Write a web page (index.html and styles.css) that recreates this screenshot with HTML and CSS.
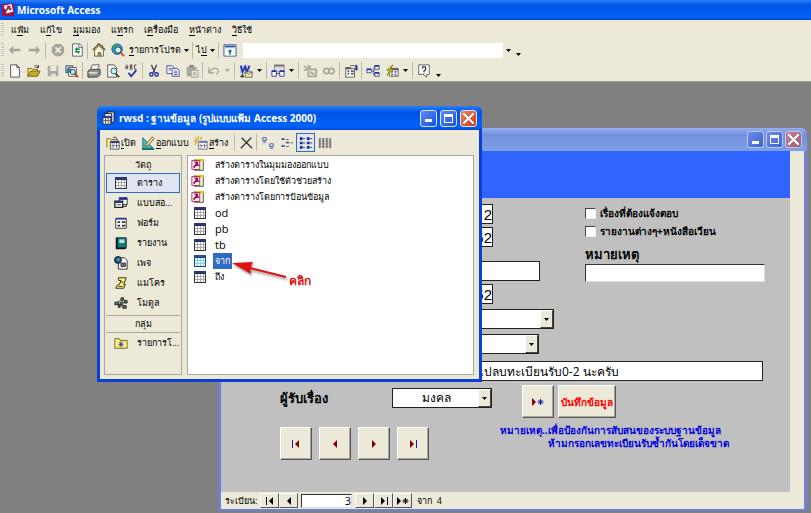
FILE: index.html
```
<!DOCTYPE html>
<html lang="th">
<head>
<meta charset="utf-8">
<title>Microsoft Access</title>
<link rel="stylesheet" href="styles.css">
</head>
<body>
<svg class="defs" aria-hidden="true">
  <symbol id="key" viewBox="0 0 16 16"><path d="M1 1h14v14H1z" fill="#a01040"/><path d="M3 3l9-2 2 9-8 2z" fill="#fff"/><path d="M5 9l5-5M7 4l4 0M9 7l3 0M3 12l3-3" stroke="#a01040" stroke-width="2"/></symbol>
  <symbol id="back" viewBox="0 0 16 16"><path d="M1 8l5-5v3.500h8v3H6V13z" fill="#a5a59b"/></symbol>
  <symbol id="fwd" viewBox="0 0 16 16"><path d="M15 8l-5-5v3.500H2v3h8V13z" fill="#a5a59b"/></symbol>
  <symbol id="stop" viewBox="0 0 16 16"><path d="M5 1h6l4 4v6l-4 4H5l-4-4V5z" fill="#a5a59b"/><path d="M5 5l6 6M11 5l-6 6" stroke="#f2f1e4" stroke-width="2"/></symbol>
  <symbol id="refresh" viewBox="0 0 16 16"><path d="M3 1h8l3 3v11H3z" fill="#fff" stroke="#556"/><path d="M10 1v4h4" fill="none" stroke="#556"/><path d="M5 8l3-4v2h3v2H8v1M12 9l-3 4v-2H6V9" fill="#159447"/></symbol>
  <symbol id="home" viewBox="0 0 16 16"><path d="M3 8v7h10V8L8 3z" fill="#fffbd5" stroke="#555"/><path d="M1 8l7-7 7 7" fill="none" stroke="#786634" stroke-width="2"/><path d="M12 2v4M7 15v-4h3v4" fill="#a89448" stroke="#555"/></symbol>
  <symbol id="globe" viewBox="0 0 16 16"><circle cx="7" cy="7" r="6" fill="#2b9dc4" stroke="#18517a"/><path d="M2 4l4-2 1 3-3 2z" fill="#3aa35b"/><circle cx="8" cy="8" r="3.500" fill="#cff3ff" stroke="#444"/><path d="M11 11l4 4" stroke="#c24b22" stroke-width="2"/></symbol>
  <symbol id="showbar" viewBox="0 0 16 16"><path d="M1 2h14v13H1z" fill="#dfeafa" stroke="#45608e"/><path d="M2 3h12v2H2z" fill="#3457a0"/><path d="M3 7h10v7H3z" fill="#fff"/><path d="M8 7l3 3H9v3H7v-3H5z" fill="#198272"/></symbol>
  <symbol id="new" viewBox="0 0 16 16"><path d="M3 1h7l3 3v11H3z" fill="#fff" stroke="#445"/><path d="M10 1v3h3" fill="none" stroke="#445"/></symbol>
  <symbol id="folder" viewBox="0 0 16 16"><path d="M1 14V5h4l1 1h6v3" fill="#fff08a" stroke="#6b6010"/><path d="M1 14l3-6h11l-3 6z" fill="#c9a92b" stroke="#6b6010"/><path d="M8 3q3-3 5 1m0-3v3h-3" fill="none" stroke="#333"/></symbol>
  <symbol id="save" viewBox="0 0 16 16"><path d="M2 2h12v12H2z" fill="#aaa9a0"/><path d="M5 2h7v6H5zM6 11h5v3H6z" fill="#ece9d8"/></symbol>
  <symbol id="filesearch" viewBox="0 0 16 16"><path d="M1 2h8v8H1z" fill="#ccd" stroke="#444"/><path d="M4 4h9v10H4z" fill="#fff" stroke="#555"/><path d="M2 5h5v5H2z" fill="#2c7db0"/><circle cx="9" cy="9" r="3" fill="#aeeaf0" stroke="#333"/><path d="M11 11l4 4" stroke="#a53a20" stroke-width="2"/></symbol>
  <symbol id="print" viewBox="0 0 16 16"><path d="M4 7l2-6h8l-2 6" fill="#fff" stroke="#555"/><path d="M1 8l3-2h11v6l-3 3H1z" fill="#888" stroke="#444"/><path d="M2 9h10v2H2z" fill="#ddd"/><path d="M4 12h6" stroke="#ccb93b"/></symbol>
  <symbol id="preview" viewBox="0 0 16 16"><path d="M2 1h7l3 3v11H2z" fill="#fff" stroke="#445"/><circle cx="9" cy="8" r="3.500" fill="#b7eef4" stroke="#344"/><path d="M11 11l4 4" stroke="#444" stroke-width="2"/></symbol>
  <symbol id="spell" viewBox="0 0 16 16"><path d="M1 6V2l1-1 1 1v4M1 4h2M6 1v5h2V1zM6 3h2M13 1h-2v5h2" fill="none" stroke="#444"/><path d="M4 10l3 4 6-7" fill="none" stroke="#2435a0" stroke-width="2"/></symbol>
  <symbol id="cut" viewBox="0 0 16 16"><path d="M5 1l4 9M11 1l-4 9" stroke="#445" stroke-width="1.500"/><circle cx="5" cy="12" r="2" fill="none" stroke="#26359d" stroke-width="1.500"/><circle cx="11" cy="12" r="2" fill="none" stroke="#26359d" stroke-width="1.500"/></symbol>
  <symbol id="copy" viewBox="0 0 16 16"><path d="M1 2h6l2 2v7H1z" fill="#fff" stroke="#34438e"/><path d="M7 5h6l2 2v7H7z" fill="#fff" stroke="#34438e"/><path d="M3 5h3M3 7h3M9 8h4M9 10h4M9 12h4" stroke="#34438e"/></symbol>
  <symbol id="paste" viewBox="0 0 16 16"><path d="M2 3h11v11H2z" fill="#aaa99e"/><path d="M5 1h5v3H5z" fill="#8d8c84"/><path d="M7 7h8v8H7z" fill="#e9e6d8" stroke="#999"/><path d="M9 10h4M9 12h4" stroke="#999"/></symbol>
  <symbol id="undo" viewBox="0 0 16 16"><path d="M2 4v6h6M3 9q3-5 8-4 4 3 0 7" fill="none" stroke="#aaa99e" stroke-width="1.500"/></symbol>
  <symbol id="word" viewBox="0 0 16 16"><path d="M1 1h12v10H1z" fill="#c5cdf0"/><path d="M2 2l2 7 3-6 2 6 3-7" fill="none" stroke="#26359d" stroke-width="2"/><path d="M7 9h8v6H7z" fill="#fff6bd" stroke="#555"/><path d="M7 9l4 3 4-3" fill="none" stroke="#555"/><path d="M1 15l3-4 2 4z" fill="#333"/></symbol>
  <symbol id="relations" viewBox="0 0 16 16"><path d="M4 1h11v8H4z" fill="#ddd" stroke="#888"/><path d="M4 2h11" stroke="#777" stroke-width="2"/><path d="M1 8h5v6H1zM10 8h5v6h-5z" fill="#fff" stroke="#26359d"/><path d="M1 8h5M10 8h5" stroke="#26359d" stroke-width="2"/><path d="M6 11h4" stroke="#333"/></symbol>
  <symbol id="analyze" viewBox="0 0 16 16"><path d="M6 6h9v8H6z" fill="none" stroke="#aaa99e" stroke-width="2"/><path d="M1 2l4 4M6 1v4M1 7h3M9 2l-2 3M8 9l5 3" stroke="#aaa99e" stroke-width="2"/></symbol>
  <symbol id="code" viewBox="0 0 16 16"><circle cx="5" cy="8" r="3" fill="none" stroke="#aaa99e" stroke-width="2"/><circle cx="11" cy="8" r="3" fill="none" stroke="#aaa99e" stroke-width="2"/></symbol>
  <symbol id="props" viewBox="0 0 16 16"><path d="M2 4h10v11H2z" fill="#fff" stroke="#555"/><path d="M2 5h7M4 8h2M4 11h2M8 8h3M8 11h3" stroke="#555" stroke-width="2"/><path d="M7 2h5l3 1v4l-3-2H8" fill="#fff" stroke="#444"/><path d="M14 1v6" stroke="#26359d" stroke-width="2"/></symbol>
  <symbol id="tree" viewBox="0 0 16 16"><path d="M6 8h3V4h2M9 8v5h2" fill="none" stroke="#444"/><path d="M1 6h5v4H1zM10 2h5v4h-5zM10 10h5v4h-5z" fill="#fff" stroke="#34438e"/><path d="M1 6h5M10 2h5M10 10h5" stroke="#26359d" stroke-width="2"/></symbol>
  <symbol id="newobj" viewBox="0 0 16 16"><path d="M5 5h10v9H5z" fill="#fff" stroke="#555"/><path d="M5 6h10M7 9h2M11 9h2M7 12h2M11 12h2" stroke="#556" stroke-width="2"/><path d="M9 1L2 7h4l-4 6 8-7H6z" fill="#ffe11e" stroke="#7b7410"/></symbol>
  <symbol id="help" viewBox="0 0 16 16"><path d="M2 1h12v11h-3v3l-4-3H2z" fill="#fff" stroke="#555"/><path d="M6 5q0-2 2-2t2 2-2 3v1M8 10v1" fill="none" stroke="#333" stroke-width="1.500"/></symbol>
  <symbol id="caret" viewBox="0 0 5 3"><path d="M0 0h5L2.500 3z" fill="currentColor"/></symbol>
  <symbol id="db" viewBox="0 0 16 16"><path d="M6 1h8v12H6z" fill="#c8d5f0" stroke="#111"/><path d="M3 3h8v10H3z" fill="#fff" stroke="#111"/><path d="M1 6h9v9H1z" fill="#eee" stroke="#222"/><path d="M1 7h9" stroke="#26359d" stroke-width="2"/><path d="M4 8v6M7 8v6M2 11h8" stroke="#555"/></symbol>
  <symbol id="dbopen" viewBox="0 0 16 16"><path d="M1 13V3h4l1 1h7v3" fill="#fff08a" stroke="#7b6a1a"/><path d="M5 6h10v9H5z" fill="#fff" stroke="#445"/><path d="M5 7h10" stroke="#26359d" stroke-width="2"/><path d="M8 8v6M12 8v6M6 11h9" stroke="#667"/><path d="M8 2q3-2 5 1" fill="none" stroke="#333"/></symbol>
  <symbol id="design" viewBox="0 0 16 16"><path d="M2 2v12h12z" fill="#54b8b5" stroke="#156b75"/><path d="M5 9v3h3z" fill="#f2f1e4"/><path d="M13 1l2 2-7 8-3 1 1-3z" fill="#ffe773" stroke="#444"/><path d="M1 15h14" stroke="#156b75" stroke-width="2"/></symbol>
  <symbol id="dbnew" viewBox="0 0 16 16"><path d="M5 6h10v9H5z" fill="#fff" stroke="#667"/><path d="M6 7h9" stroke="#6c7bb2" stroke-width="2"/><path d="M8 9v5M12 9v5M6 11h9" stroke="#778"/><path d="M1 2l3 3M5 0v4M0 6h4M9 1L7 4M3 7l-2 3" stroke="#d4b020" stroke-width="1.500"/></symbol>
  <symbol id="delete" viewBox="0 0 16 16"><path d="M3 2l12 12M14 2L2 14" fill="none" stroke="#333" stroke-width="1.500"/></symbol>
  <symbol id="large" viewBox="0 0 16 16"><path d="M2 2h4v3H2zM10 9h4v3h-4z" fill="#fff" stroke="#34438e"/><path d="M2 7h4M10 14h4" stroke="#34438e"/></symbol>
  <symbol id="small" viewBox="0 0 16 16"><path d="M2 3h3v1H2zM7 7h3v1H7zM2 11h3v1H2z" fill="#fff" stroke="#34438e"/><path d="M7 4h3M12 8h3M7 12h3" stroke="#556"/></symbol>
  <symbol id="list" viewBox="0 0 16 16"><path d="M1 3h3M9 3h3M1 8h3M9 8h3M1 13h3M9 13h3" stroke="#19288e" stroke-width="3"/><path d="M4 3h3M12 3h3M4 8h3M12 8h3M4 13h3M12 13h3" stroke="#444"/></symbol>
  <symbol id="details" viewBox="0 0 16 16"><path d="M1 3h14M1 6h14M1 9h14M1 12h14" stroke="#777" stroke-dasharray="3 1"/><path d="M2 3v11M6 3v11M10 3v11M14 3v11" stroke="#777" stroke-width="2"/></symbol>
  <symbol id="table" viewBox="0 0 14 14"><path d="M1 1h12v12H1z" fill="#333"/><path d="M1 1h12v2H1z" fill="#26359d"/><path d="M2 4h10v8H2z" fill="#fff"/><path d="M4.500 4v8M7.500 4v8M10.500 4v8M2 6.500h10M2 9.500h10" stroke="#aaa"/></symbol>
  <symbol id="query" viewBox="0 0 16 16"><path d="M6 2h9v8H6z" fill="#fff" stroke="#222"/><path d="M6 3h9" stroke="#26359d" stroke-width="3"/><path d="M1 6h9v7H1z" fill="#fff" stroke="#222" stroke-width="1.500"/><path d="M1 7h9" stroke="#26359d" stroke-width="2"/><path d="M3 10h5M10 12h4V9" fill="none" stroke="#333"/></symbol>
  <symbol id="form" viewBox="0 0 16 16"><path d="M2 3h12v11H2z" fill="#fff" stroke="#222"/><path d="M2 3h12" stroke="#26359d" stroke-width="2"/><path d="M4 7h3M4 11h3M9 7h4M9 11h4" stroke="#333" stroke-width="2"/></symbol>
  <symbol id="report" viewBox="0 0 16 16"><path d="M3 2h11v12H3z" fill="#137d75" stroke="#123"/><path d="M6 4h6v4H6z" fill="#b8e1dc"/><path d="M3 2v12h10" fill="none" stroke="#112" stroke-width="2"/></symbol>
  <symbol id="page" viewBox="0 0 16 16"><path d="M5 2h7l3 3v10H5z" fill="#fff" stroke="#222"/><path d="M8 8h5v4H8z" fill="#677" stroke="#333"/><circle cx="4.500" cy="4.500" r="4" fill="#1b4f90" stroke="#123"/><path d="M3 3l3-1 1 3-3 1z" fill="#42b257"/></symbol>
  <symbol id="macro" viewBox="0 0 16 16"><path d="M5 2h9l-3 8h2l-2 4H2l2-4h2l2-5H5z" fill="#fff16a" stroke="#222"/><path d="M7 7h4M5 12h5" stroke="#333"/></symbol>
  <symbol id="module" viewBox="0 0 16 16"><path d="M3 8l7-5M4 9l8 4M9 7l5 1" stroke="#333"/><path d="M1 7h4v3H1zM8 2h3v3H8zM12 5h3v3h-3zM7 7h3v3H7zM10 11h4v3h-4zM5 10h2v3H5z" fill="#567b65" stroke="#222"/></symbol>
  <symbol id="fav" viewBox="0 0 16 16"><path d="M1 14V3h5l1 2h8v9z" fill="#fff37b" stroke="#665b19"/><path d="M8 6v7M5 9.500h6M6 7l4 5M10 7l-4 5" stroke="#2435c0"/></symbol>
  <symbol id="wizard" viewBox="0 0 16 16"><path d="M4 2h10v12H4z" fill="#fffce4" stroke="#333"/><path d="M5 1h10v3H5z" fill="#e4c42c"/><path d="M1 3h9v10H1z" fill="#fff" stroke="#a01048"/><path d="M3 11l5-6M4 5h4M6 8h3" stroke="#a01048" stroke-width="2"/></symbol>
  <symbol id="first" viewBox="0 0 12 12"><path class="bar" d="M2 2h1v8H2z"/><path class="tri" d="M9 2v8L5 6z"/></symbol>
  <symbol id="prev" viewBox="0 0 12 12"><path class="tri" d="M8 2v8L4 6z"/></symbol>
  <symbol id="next" viewBox="0 0 12 12"><path class="tri" d="M4 2v8l4-4z"/></symbol>
  <symbol id="last" viewBox="0 0 12 12"><path class="tri" d="M3 2v8l4-4z"/><path class="bar" d="M9 2h1v8H9z"/></symbol>
  <symbol id="add" viewBox="0 0 14 12"><path class="tri" d="M1 2v8l4-4z"/><path class="star" d="M9.500 3v6M6.500 6h6M7.500 4l4 4M11.500 4l-4 4"/></symbol>
</svg>

<header class="app-title"><svg class="icon"><use href="#key"/></svg><h1>Microsoft Access</h1></header>

<nav class="menu bar-row">
  <i class="grip"></i>
  <button>แ<u>ฟ้</u>ม</button><button>แ<u>ก้</u>ไข</button><button><u>มุ</u>มมอง</button><button>แ<u>ท</u>รก</button><button>เ<u>ค</u>รื่องมือ</button><button><u>ห</u>น้าต่าง</button><button><u>วิ</u>ธีใช้</button>
</nav>

<div class="bar-row">
  <i class="grip"></i>
  <button class="tool" aria-label="ย้อนกลับ"><svg class="icon"><use href="#back"/></svg></button>
  <button class="tool" aria-label="ไปข้างหน้า"><svg class="icon"><use href="#fwd"/></svg></button>
  <i class="sep wide-sep"></i>
  <button class="tool" aria-label="หยุด"><svg class="icon"><use href="#stop"/></svg></button>
  <button class="tool" aria-label="ฟื้นฟู"><svg class="icon"><use href="#refresh"/></svg></button>
  <i class="sep"></i>
  <button class="tool" aria-label="หน้าแรก"><svg class="icon"><use href="#home"/></svg></button>
  <button class="tool" aria-label="ค้นหาเว็บ"><svg class="icon"><use href="#globe"/></svg></button>
  <button class="text-tool"><span><u>ร</u>ายการโปรด</span><svg class="caret"><use href="#caret"/></svg></button>
  <i class="sep"></i>
  <button class="text-tool"><span>ไ<u>ป</u></span><svg class="caret"><use href="#caret"/></svg></button>
  <i class="sep"></i>
  <button class="tool" aria-label="แถบเครื่องมือเว็บ"><svg class="icon"><use href="#showbar"/></svg></button>
  <div class="address"><input type="text" aria-label="ที่อยู่"><button class="drop" aria-label="แสดงรายการ"><svg class="caret"><use href="#caret"/></svg></button></div>
  <button class="more" aria-label="ตัวเลือก"><svg class="caret"><use href="#caret"/></svg></button>
</div>

<div class="bar-row last">
  <i class="grip"></i>
  <button class="tool" aria-label="ใหม่"><svg class="icon"><use href="#new"/></svg></button>
  <button class="tool" aria-label="เปิดแฟ้ม"><svg class="icon"><use href="#folder"/></svg></button>
  <button class="tool" aria-label="บันทึก"><svg class="icon"><use href="#save"/></svg></button>
  <button class="tool" aria-label="ค้นหาแฟ้ม"><svg class="icon"><use href="#filesearch"/></svg></button>
  <i class="sep"></i>
  <button class="tool" aria-label="พิมพ์"><svg class="icon"><use href="#print"/></svg></button>
  <button class="tool" aria-label="ตัวอย่าง"><svg class="icon"><use href="#preview"/></svg></button>
  <button class="tool" aria-label="สะกด"><svg class="icon"><use href="#spell"/></svg></button>
  <i class="sep"></i>
  <button class="tool" aria-label="ตัด"><svg class="icon"><use href="#cut"/></svg></button>
  <button class="tool" aria-label="คัดลอก"><svg class="icon"><use href="#copy"/></svg></button>
  <button class="tool" aria-label="วาง"><svg class="icon"><use href="#paste"/></svg></button>
  <i class="sep"></i>
  <button class="tool split off" aria-label="เลิกทำ"><svg class="icon"><use href="#undo"/></svg><svg class="caret"><use href="#caret"/></svg></button>
  <i class="sep"></i>
  <button class="tool split" aria-label="Word"><svg class="icon"><use href="#word"/></svg><svg class="caret"><use href="#caret"/></svg></button>
  <i class="sep"></i>
  <button class="tool split" aria-label="วิเคราะห์"><svg class="icon"><use href="#relations"/></svg><svg class="caret"><use href="#caret"/></svg></button>
  <i class="sep"></i>
  <button class="tool" aria-label="รหัส"><svg class="icon"><use href="#analyze"/></svg></button>
  <button class="tool" aria-label="สคริปต์"><svg class="icon"><use href="#code"/></svg></button>
  <i class="sep"></i>
  <button class="tool" aria-label="คุณสมบัติ"><svg class="icon"><use href="#props"/></svg></button>
  <i class="sep"></i>
  <button class="tool" aria-label="ความสัมพันธ์"><svg class="icon"><use href="#tree"/></svg></button>
  <button class="tool split" aria-label="วัตถุใหม่"><svg class="icon"><use href="#newobj"/></svg><svg class="caret"><use href="#caret"/></svg></button>
  <i class="sep"></i>
  <button class="tool" aria-label="วิธีใช้"><svg class="icon"><use href="#help"/></svg></button>
  <button class="more" aria-label="ตัวเลือกเพิ่มเติม"><svg class="caret"><use href="#caret"/></svg></button>
</div>

<main class="desktop">
  <section class="window form-window">
    <header class="win-title">
      <button class="ctl" aria-label="ย่อ"><i class="min"></i></button><button class="ctl" aria-label="ขยาย"><i class="max"></i></button><button class="ctl close" aria-label="ปิด"><i class="x"></i></button>
    </header>
    <div class="form-client">
      <div class="form-head"></div>
      <form class="form-body">
        <div class="form-top">
          <div class="fields">
            <input class="num" type="text" value="2" aria-label="เลขทะเบียน">
            <input class="num" type="text" value="2552" aria-label="ปี">
            <input class="wide after" type="text" aria-label="ที่">
            <input class="num" type="text" value="2552" aria-label="ลงวันที่">
            <div class="combo c-from"><select aria-label="จาก"><option></option></select><i class="arrow"><svg class="caret"><use href="#caret"/></svg></i></div>
            <div class="combo c-to"><select aria-label="ถึง"><option></option></select><i class="arrow"><svg class="caret"><use href="#caret"/></svg></i></div>
          </div>
          <div class="flags">
            <label class="check"><input type="checkbox"><span>เรื่องที่ต้องแจ้งตอบ</span></label>
            <label class="check"><input type="checkbox"><span>รายงานต่างๆ+หนังสือเวียน</span></label>
            <label class="caption" for="note">หมายเหตุ</label>
            <input class="note" id="note" type="text">
          </div>
        </div>
        <input class="subject" type="text" value="แปลบทะเบียนรับ0-2 นะครับ" aria-label="เรื่อง">
        <div class="receiver">
          <label class="caption" for="recv">ผู้รับเรื่อง</label>
          <div class="combo c-recv"><select id="recv"><option>มงคล</option></select><i class="arrow"><svg class="caret"><use href="#caret"/></svg></i></div>
          <button type="button" class="push" aria-label="เพิ่มระเบียน"><svg class="nav-icon add"><use href="#add"/></svg></button>
          <button type="button" class="push save">บันทึกข้อมูล</button>
        </div>
        <div class="form-foot">
          <div class="movers">
            <button type="button" class="push" aria-label="แรก"><svg class="nav-icon"><use href="#first"/></svg></button>
            <button type="button" class="push" aria-label="ก่อนหน้า"><svg class="nav-icon"><use href="#prev"/></svg></button>
            <button type="button" class="push" aria-label="ถัดไป"><svg class="nav-icon"><use href="#next"/></svg></button>
            <button type="button" class="push" aria-label="สุดท้าย"><svg class="nav-icon"><use href="#last"/></svg></button>
          </div>
          <p class="warning"><span>หมายเหตุ..เพื่อป้องกันการสับสนของระบบฐานข้อมูล</span><span class="second">ห้ามกรอกเลขทะเบียนรับซ้ำกันโดยเด็จขาด</span></p>
        </div>
      </form>
    </div>
    <footer class="record-nav">
      <label for="rec">ระเบียน:</label>
      <button aria-label="ระเบียนแรก"><svg class="nav-icon"><use href="#first"/></svg></button>
      <button aria-label="ระเบียนก่อน"><svg class="nav-icon"><use href="#prev"/></svg></button>
      <input id="rec" type="text" value="3">
      <button aria-label="ระเบียนถัดไป"><svg class="nav-icon"><use href="#next"/></svg></button>
      <button aria-label="ระเบียนสุดท้าย"><svg class="nav-icon"><use href="#last"/></svg></button>
      <button aria-label="ระเบียนใหม่"><svg class="nav-icon add"><use href="#add"/></svg></button>
      <span class="of">จาก&nbsp; 4</span>
    </footer>
  </section>

  <section class="window db-window">
    <header class="win-title">
      <svg class="icon"><use href="#db"/></svg>
      <h2>rwsd : ฐานข้อมูล (รูปแบบแฟ้ม Access 2000)</h2>
      <button class="ctl" aria-label="ย่อ"><i class="min"></i></button><button class="ctl" aria-label="ขยาย"><i class="max"></i></button><button class="ctl close" aria-label="ปิด"><i class="x"></i></button>
    </header>
    <div class="db-tools">
      <button class="cmd"><svg class="icon"><use href="#dbopen"/></svg><span><u>เ</u>ปิด</span></button>
      <button class="cmd"><svg class="icon"><use href="#design"/></svg><span><u>อ</u>อกแบบ</span></button>
      <button class="cmd"><svg class="icon"><use href="#dbnew"/></svg><span><u>ส</u>ร้าง</span></button>
      <i class="sep"></i>
      <button class="tool" aria-label="ลบ"><svg class="icon"><use href="#delete"/></svg></button>
      <i class="sep"></i>
      <button class="tool" aria-label="ไอคอนใหญ่"><svg class="icon"><use href="#large"/></svg></button>
      <button class="tool" aria-label="ไอคอนเล็ก"><svg class="icon"><use href="#small"/></svg></button>
      <button class="tool pressed" aria-label="รายการ"><svg class="icon"><use href="#list"/></svg></button>
      <button class="tool" aria-label="รายละเอียด"><svg class="icon"><use href="#details"/></svg></button>
    </div>
    <div class="db-main">
      <nav class="objects">
        <h3>วัตถุ</h3>
        <button class="current"><svg class="icon"><use href="#table"/></svg>ตาราง</button>
        <button><svg class="icon"><use href="#query"/></svg>แบบสอ...</button>
        <button><svg class="icon"><use href="#form"/></svg>ฟอร์ม</button>
        <button><svg class="icon"><use href="#report"/></svg>รายงาน</button>
        <button><svg class="icon"><use href="#page"/></svg>เพจ</button>
        <button><svg class="icon"><use href="#macro"/></svg>แมโคร</button>
        <button><svg class="icon"><use href="#module"/></svg>โมดูล</button>
        <h3 class="group">กลุ่ม</h3>
        <button><svg class="icon"><use href="#fav"/></svg>รายการโ...</button>
      </nav>
      <ul class="items">
        <li><svg class="icon"><use href="#wizard"/></svg><span>สร้างตารางในมุมมองออกแบบ</span></li>
        <li><svg class="icon"><use href="#wizard"/></svg><span>สร้างตารางโดยใช้ตัวช่วยสร้าง</span></li>
        <li><svg class="icon"><use href="#wizard"/></svg><span>สร้างตารางโดยการป้อนข้อมูล</span></li>
        <li class="tbl"><svg class="icon"><use href="#table"/></svg><span class="latin">od</span></li>
        <li class="tbl"><svg class="icon"><use href="#table"/></svg><span class="latin">pb</span></li>
        <li class="tbl"><svg class="icon"><use href="#table"/></svg><span class="latin">tb</span></li>
        <li class="tbl selected"><svg class="icon"><use href="#table"/></svg><span>จาก</span></li>
        <li class="tbl"><svg class="icon"><use href="#table"/></svg><span>ถึง</span></li>
      </ul>
    </div>
    <div class="callout">
      <svg viewBox="0 0 58 22"><path d="M19 8l36 9" stroke="#e01010" stroke-width="2"/><path d="M1 3l21-1-3 6 1 6z" fill="#e01010"/></svg>
      <b>คลิก</b>
    </div>
  </section>
</main>
</body>
</html>
```
FILE: styles.css
```
* { box-sizing: border-box; }
body {
  margin: 0;
  height: 100vh;
  display: flex;
  flex-direction: column;
  overflow: hidden;
  background: #ece9d8;
  color: #000;
  font: 9px/16px "Open Sans", "Noto Sans", sans-serif;
}
button, input, select { font: inherit; color: inherit; margin: 0; padding: 0; border: 0; border-radius: 0; background: none; }
h1, h2, h3, p, ul { margin: 0; padding: 0; font: inherit; list-style: none; }
i { font-style: normal; }
u { text-underline-offset: 2px; }
.defs { position: absolute; width: 0; height: 0; }
.icon { width: 14px; height: 14px; flex: none; }
.caret { width: 5px; height: 3px; flex: none; }

.app-title {
  display: flex;
  align-items: center;
  gap: 2px;
  height: 20px;
  padding: 0 1px;
  flex: none;
  color: #fff;
  background: linear-gradient(#2a80f8, #0054e3 25%, #0062fa 85%, #0048d0);
}
.app-title h1 { font-weight: 700; font-size: 10px; font-family: "Noto Sans", sans-serif; white-space: nowrap; }

.bar-row { display: flex; align-items: center; height: 20px; flex: none; }
.bar-row.last { height: 22px; border-bottom: 1px solid #a09d90; }
.grip { width: 3px; height: 14px; margin: 0 1px; flex: none; background: repeating-linear-gradient(#c4c1b0 0 1px, #f2f0e4 1px 2px); }
.sep { width: 1px; height: 17px; margin: 0 1px; flex: none; background: #bdbaa8; }
.wide-sep { margin: 0 2px; }
.menu { gap: 11px; }
.menu .grip { margin-right: -4px; }
.tool { display: flex; align-items: center; justify-content: center; width: 19px; height: 19px; flex: none; }
.tool.split { width: 29px; gap: 4px; }
.off { color: #aaa99e; }
.text-tool { display: flex; align-items: center; gap: 3px; white-space: nowrap; padding: 0 2px; }
.address { display: flex; width: 270px; height: 15px; margin-left: 4px; background: #fff; }
.address input { flex: 1; min-width: 0; }
.drop { display: flex; align-items: center; justify-content: center; width: 10px; background: #ece9d8; }
.more { display: flex; align-items: flex-end; height: 12px; margin-left: 3px; }

.desktop { position: relative; flex: 1; background: #808080; }
.window { position: absolute; display: flex; flex-direction: column; border-radius: 6px 6px 0 0; }
.win-title { display: flex; align-items: center; justify-content: flex-end; gap: 2px; height: 23px; padding: 0 2px; flex: none; color: #fff; }
.win-title h2 { flex: 1; font-family: "Noto Sans", sans-serif; font-size: 10px; font-weight: 700; white-space: nowrap; }
.ctl { display: flex; align-items: center; justify-content: center; width: 17px; height: 17px; border: 1px solid #d8e4ff; border-radius: 3px; background: linear-gradient(135deg, #5b8cf8, #1d4fd8); }
.ctl.close { background: linear-gradient(135deg, #f0805c, #d43c14); }
.min { width: 7px; height: 8px; border-bottom: 3px solid #fff; }
.max { width: 9px; height: 9px; border: 1px solid #fff; border-top-width: 3px; }
.x { width: 11px; height: 11px; background: linear-gradient(45deg, transparent 43%, #fff 43% 57%, transparent 57%), linear-gradient(-45deg, transparent 43%, #fff 43% 57%, transparent 57%); }

.form-window { left: 218px; top: 46px; width: 589px; border: 3px solid #6c80d8; border-top-width: 0; border-bottom-width: 2px; background: #ece9d8; }
.form-window .win-title { background: linear-gradient(#94b0f0, #7590dc 30%, #7da0e8); margin: 0 -3px; padding: 0 5px; border-radius: 6px 6px 0 0; }
.form-window .ctl { border-color: #b8c8f4; background: linear-gradient(135deg, #6d8ce8, #3f62d0); }
.form-window .ctl.close { background: linear-gradient(135deg, #c88494, #a85870); }
.form-client { margin-right: 14px; background: #c0c0c0; }
.form-head { height: 47px; background: #3163ff; }
.form-body { padding: 6px 0 32px 59px; }
.form-top { display: flex; justify-content: space-between; }
.fields { display: flex; flex-direction: column; align-items: flex-start; gap: 3px; padding-left: 112px; }
.fields input, .subject { height: 20px; border: 1px solid #222; background: #fff; }
.fields .num { width: 101px; text-align: right; font: 15px "Liberation Sans", sans-serif; }
.fields .wide { width: 148px; }
.fields .after { margin-top: 11px; }
.combo { position: relative; height: 20px; border: 1px solid #222; background: #fff; }
.combo select { width: 100%; height: 100%; padding-left: 29px; appearance: none; font-size: 12px; }
.arrow { position: absolute; right: 0; top: 0; bottom: 0; width: 13px; display: flex; align-items: center; justify-content: center; background: #ece9d8; border: 1px solid; border-color: #fff #444 #444 #fff; pointer-events: none; }
.c-from { width: 162px; margin-top: 2px; }
.c-to { width: 147px; margin-top: 2px; }
.c-recv { width: 100px; }
.flags { display: flex; flex-direction: column; width: 205px; }
.check { display: flex; align-items: center; gap: 4px; height: 18px; font-weight: 700; font-size: 10px; white-space: nowrap; }
.check input { appearance: none; width: 11px; height: 11px; background: #fff; border: 1px solid; border-color: #444 #eee #eee #444; }
.caption { font-size: 13px; line-height: 20px; font-weight: 700; }
.flags .caption { margin-top: 4px; font-weight: 600; }
.note { width: 180px; height: 18px; border: 1px solid; border-color: #333 #ddd #ddd #333; background: #fff; }
.subject { display: block; width: 371px; margin: 7px 0 4px 112px; padding-left: 83px; font-size: 12px; }
.receiver { display: flex; align-items: flex-start; }
.receiver .caption { width: 112px; padding-top: 3px; }
.receiver .combo { margin-top: 3px; }
.push { display: flex; align-items: center; justify-content: center; width: 32px; height: 33px; background: #ece9d8; border: 1px solid; border-color: #fff #555 #555 #fff; box-shadow: inset -1px -1px #aca899; }
.receiver .push { margin-left: 30px; }
.receiver .push.save { width: 58px; margin-left: 4px; color: #f00; font-weight: 700; font-size: 10px; white-space: nowrap; }
.nav-icon { width: 12px; height: 12px; flex: none; }
.nav-icon.add { width: 14px; }
.bar { fill: #1a1ab0; }
.tri { fill: #800000; }
.star { stroke: #1a1ab0; }
.form-foot { display: flex; }
.movers { display: flex; gap: 7px; padding-top: 9px; }
.warning { display: flex; flex-direction: column; padding-top: 6px; margin-left: 71px; line-height: 13px; font-weight: 700; font-size: 10px; color: #0000e0; white-space: nowrap; }
.second { margin-left: 48px; }
.record-nav { display: flex; align-items: center; height: 17px; padding-left: 4px; white-space: nowrap; }
.record-nav label { width: 35px; }
.record-nav button { display: flex; align-items: center; justify-content: center; width: 19px; height: 15px; border: 1px solid; border-color: #fff #555 #555 #fff; }
.record-nav input { width: 51px; height: 14px; margin: 0 3px; border: 1px solid; border-color: #333 #ddd #ddd #333; background: #fff; text-align: right; font-size: 11px; }
.record-nav .nav-icon { filter: brightness(0); }
.of { margin-left: 5px; }

.db-window { left: 97px; top: 24px; width: 385px; border: 3px solid #0a3fd8; border-top-width: 0; background: #ece9d8; }
.db-window .win-title { height: 24px; margin: 0 -3px; padding: 0 5px; gap: 3px; border-radius: 6px 6px 0 0; background: linear-gradient(#2a80f8, #0054e3 25%, #0062fa 85%, #0048d0); }
.db-tools { display: flex; align-items: center; height: 25px; padding-left: 6px; white-space: nowrap; }
.cmd { display: flex; align-items: center; gap: 1px; margin-right: 5px; }
.pressed { border: 1px solid #316ac5; background: #dfe6f2; }
.db-main { display: flex; gap: 5px; padding: 0 5px 4px 4px; }
.objects { display: flex; flex-direction: column; width: 78px; padding: 1px; border: 1px solid #aca899; flex: none; }
.objects h3 { text-align: center; }
.objects .group { margin-top: 2px; border: 1px solid #aca899; border-width: 1px 0; }
.objects button { display: flex; align-items: center; gap: 9px; height: 20px; padding-left: 8px; white-space: nowrap; }
.objects .current { border: 1px solid #316ac5; background: #dfe6f2; padding-left: 7px; }
.items { flex: 1; height: 220px; padding: 1px 3px; border: 1px solid #aca899; background: #fff; }
.items li { display: flex; align-items: center; gap: 8px; height: 16px; }
.items .tbl { padding-left: 2px; gap: 6px; }
.items span { padding: 0 2px; line-height: 16px; white-space: nowrap; }
.items .latin { font-size: 11px; }
.items .selected span { background: #316ac5; color: #fff; }
.selected .icon { filter: sepia(1) hue-rotate(180deg) saturate(4); }
.callout { position: absolute; left: 131px; top: 154px; display: flex; align-items: flex-start; }
.callout svg { width: 58px; height: 22px; filter: drop-shadow(1px 2px 1px #999); }
.callout b { margin-top: 13px; color: #e01010; font-size: 12px; }
```
